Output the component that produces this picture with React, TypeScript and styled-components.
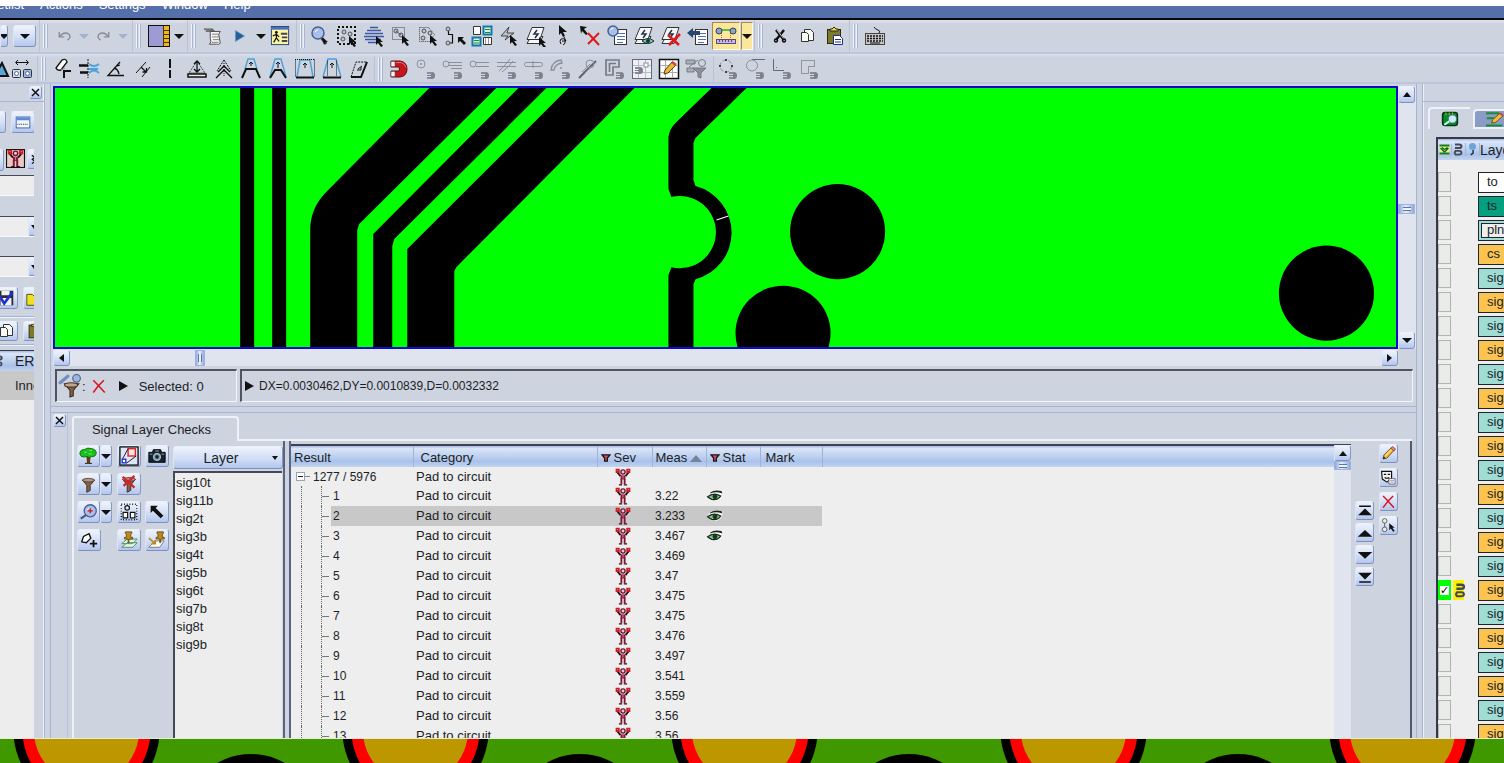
import React from "react";
import styled, { createGlobalStyle, css } from "styled-components";

const Global = createGlobalStyle`
  *, *::before, *::after { box-sizing: border-box; }
  html, body { margin: 0; padding: 0; }
  body { font-family: "Liberation Sans", Arial, sans-serif; font-size: 13px; color: #1b1e26; overflow: hidden; }
  button { font: inherit; color: inherit; border: 0; padding: 0; background: none; }
  ul { list-style: none; margin: 0; padding: 0; }
  svg { display: block; flex: none; }
`;

const panel = "#ced4df";
const line = "#a3b4d6";
const light = "#edf1f8";

/* ---------- icon drawing ---------- */

const k = "#111";
const g = "#8b8f98";
const b = "#4ea3dc";

const Cursor = ({ x, y }: { x: number; y: number }) => (
  <path transform={`translate(${x} ${y})`} d="M0 0l7 6-3 0 3 4-2 1-3-4-2 2z" fill={k} />
);
const Mag = ({ x = 12, y = 14 }: { x?: number; y?: number }) => (
  <g transform={`translate(${x} ${y})`}>
    <path d="M0 0h5q3 0 3 3.500t-3 3.500H0V5h4V4H0V3h4V2H0z" fill="#7c8089" />
    <path d="M0 1h5M0 6h4" stroke="#a6aab3" strokeWidth=".6" />
  </g>
);
const Lens = ({ x, y, r = 5 }: { x: number; y: number; r?: number }) => (
  <>
    <circle cx={x} cy={y} r={r} fill="#a9c0ea" stroke="#4a5f94" strokeWidth="1.500" />
    <path d={`M${x - r / 2} ${y - 1}q1-2 3-2`} stroke="#fff" fill="none" />
  </>
);
const Sheets = () => (
  <g fill="#f4f6fa" stroke="#333" strokeWidth="1">
    <path d="M2 18.500l4-7h12l-4 7z" />
    <path d="M2 14.500l5-12h12l-4 12z" />
    <path d="M12 5l-3 4h4l-3 4" fill="none" stroke="#234" strokeWidth="1.500" />
  </g>
);
const Dot = ({ x, y }: { x: number; y: number }) => (
  <circle cx={x} cy={y} r="2" fill="#b9c6d6" stroke="#555" />
);
const Funnel = () => (
  <>
    <path d="M4 6h14l-5 6v6l-4 2v-8z" fill="#80614b" stroke="#3a2a20" />
    <ellipse cx="11" cy="6" rx="7" ry="2" fill="#b89a80" stroke="#4a382c" />
  </>
);
const Pencil = () => (
  <>
    <path d="M4 18l1-5L14 4l4 3-9 10z" fill="#f0b830" stroke="#5a3d10" />
    <path d="M14 4l2-2 4 3-2 3z" fill="#e98a7a" stroke="#7a3a30" />
    <path d="M4 18l1-3 2 2z" fill={k} />
    <path d="M7 14l8-8" stroke="#fbe48c" strokeWidth="1.500" />
  </>
);
const Cross = () => (
  <path d="M4 4l6 6 8 9M17 4l-7 7-6 8" stroke="#d8101c" strokeWidth="1.800" fill="none" />
);
const Man = () => (
  <>
    <path d="M4 5l4 5M18 5l-4 5" stroke="#2c1018" strokeWidth="2.200" />
    <path d="M2 1h5v5H2zM15 1h5v5h-5z" fill="#c81c28" />
    <path d="M3.500 3h1.500M17 3h1.500" stroke="#f08a8a" />
    <circle cx="11" cy="5" r="2.600" fill="#f3c5d5" stroke="#6a1030" strokeWidth="1.600" />
    <path d="M8 9h6v5H8z" fill="#8e1a3c" />
    <path d="M11 9v4" stroke="#e0708c" strokeWidth="1.200" />
    <path d="M9 13v7M13 13v7" stroke="#7a1430" strokeWidth="2.200" />
    <path d="M6 20.500h4M12 20.500h4" stroke="#3a0c18" strokeWidth="1.500" />
  </>
);
const Eye = () => (
  <>
    <path d="M1 12Q7 1 20 5q2 9-7 12Q5 18 1 12z" fill="#fff" fillOpacity=".8" />
    <path d="M2 12q7-6 16-1-4 6-11 4-3-1-5-3z" fill="#8cc08c" stroke="#1a2c20" strokeWidth="1.600" />
    <circle cx="11" cy="12" r="3" fill="#123c1c" />
    <path d="M5 7q5-4 14-2l1 3Q12 5 5 8z" fill="#1c241c" />
  </>
);
const Doc = () => (
  <>
    <rect x="8.500" y="4.500" width="12" height="15" fill="#fff" stroke="#333" />
    <path d="M11 8.500h8M11 11.500h8M11 14.500h8M11 17.500h6" stroke="#5570a8" />
  </>
);

const icons: Record<string, React.ReactNode> = {
  undo: <path d="M4 6v6h6M5 11q5-6 11-2 3 4-2 7" fill="none" stroke="#858a95" strokeWidth="1.600" />,
  redo: <path d="M18 6v6h-6M17 11q-5-6-11-2-3 4 2 7" fill="none" stroke="#858a95" strokeWidth="1.600" />,
  palette: (
    <>
      <rect x="0.500" y="0.500" width="21" height="21" fill="#9d9bd6" stroke={k} />
      <path d="M15 1h6v20h-6z" fill="#f0b61e" />
      <path d="M15.500 1v20M16 5.500h5M16 9.500h5M16 13.500h5M16 17.500h5" stroke="#4a3605" />
    </>
  ),
  script: (
    <>
      <path d="M1 3.500h9l3 3M3 5.500h7" stroke="#555" fill="none" strokeWidth="1.500" />
      <path d="M8 6h11q-3 3-1 7l1 6q-2 2-4 1H7q3-2 1-6z" fill="#f4f4f2" stroke="#444" />
      <path d="M10 9h7M10 12h7M11 15h7M10 18h7" stroke="#777" />
    </>
  ),
  play: <path d="M6 5l10 6-10 6z" fill="#1f5f9a" stroke="#6a9cc8" />,
  report: (
    <>
      <rect x="1.500" y="0.500" width="19" height="20" fill="#fbf5a6" stroke="#223a70" />
      <path d="M1 1h20v3H1z" fill="#4a6fbd" />
      <circle cx="7" cy="7" r="1.500" fill={k} />
      <path d="M7 8v5l-3 5M7 13l3 4M3 11l4-2 3 3" stroke={k} fill="none" strokeWidth="1.300" />
      <path d="M12 8.500h7M13 12.500h6M13 16.500h6" stroke="#445" strokeWidth="2" />
    </>
  ),
  zoom: (
    <>
      <path d="M12 12l5 7" stroke="#333" strokeWidth="3" />
      <path d="M13 12l6 5-3 0-1 3z" fill={k} />
      <Lens x={9} y={8} r={6} />
    </>
  ),
  selDots: (
    <>
      <rect x="2" y="2" width="17" height="17" fill="none" stroke={k} strokeWidth="2" strokeDasharray="2 2" />
      <Dot x={8} y={7} /><Dot x={7} y={14} /><Dot x={14} y={9} />
      <Cursor x={13} y={11} />
    </>
  ),
  selLines: (
    <>
      <path d="M7 2.500h8M4 5.500h14M2 8.500h18M1 11.500h20M2 14.500h16M5 17.500h9" stroke="#3f55a5" strokeWidth="1.600" />
      <Cursor x={13} y={11} />
    </>
  ),
  selNet: (
    <>
      <rect x="2.500" y="2.500" width="12" height="12" fill="none" stroke="#444" strokeDasharray="1 1" />
      <Dot x={6} y={6} /><Dot x={11} y={10} /><path d="M6 6l5 4" stroke="#555" />
      <Cursor x={12} y={10} />
    </>
  ),
  selPoly: (
    <>
      <path d="M2.500 2.500h9l6 7-5 7h-10z" fill="none" stroke="#444" strokeDasharray="1 1" />
      <Dot x={7} y={6} /><Dot x={6} y={13} /><Dot x={13} y={8} />
      <Cursor x={13} y={10} />
    </>
  ),
  route: (
    <>
      <path d="M4.500 4v5.500h4V18h-5" fill="none" stroke={k} strokeWidth="1.200" />
      <Dot x={4} y={4} /><Dot x={4} y={18} />
      <path d="M14 12h6l-2 2 4 4-2 2-4-4-2 2z" fill={k} />
    </>
  ),
  tiles: (
    <>
      <path d="M2.500 1.500h7v8h-7zM12.500 12.500h8v7h-8z" fill="#fff" stroke="#333" />
      <path d="M12.500 1.500h8v8h-8zM1.500 12.500h8v8h-8z" fill="#d7f2dc" stroke="#167aa8" strokeWidth="2" />
      <path d="M14 4.500h5M14 7.500h5M3 15.500h5M3 18h5" stroke="#1b8a3c" />
      <path d="M14.500 13v6M17.500 13v6" stroke="#999" />
    </>
  ),
  bolt: (
    <>
      <path d="M11 2l-8 9h7l-3 4 9-7H9z" fill="#bcc4d0" stroke="#444" />
      <Cursor x={12} y={10} />
    </>
  ),
  sheetsCursor: (<><Sheets /><Cursor x={14} y={12} /></>),
  cursorLoop: (
    <>
      <path d="M7 0l8 7h-4l2 4-2 1-2-4-2 2z" fill={k} />
      <path d="M9 19q-2-3 0-5 3-1 4 1 1 4-2 5M12 12l2 4-4 0" fill="none" stroke={k} />
    </>
  ),
  cursorCross: (
    <>
      <path d="M1 1l7 1-3 2 4 5-2 1-4-4-1 3z" fill={k} />
      <path d="M9 8l11 12M20 8L9 19" stroke="#e01818" strokeWidth="2" />
    </>
  ),
  docLens: (<><Doc /><Lens x={7} y={6} r={5} /></>),
  sheetsEye: (
    <>
      <Sheets />
      <path d="M9 16q6-5 12 0-6 5-12 0z" fill="#8cc79a" stroke="#133" /><circle cx="15" cy="16" r="2" fill="#134" />
    </>
  ),
  sheetsCross: (<><Sheets /><path d="M8 10l11 10M20 9L9 20" stroke="#e01818" strokeWidth="2.500" /></>),
  docBack: (<><Doc /><path d="M0 8l6-5v3h7v4H6v3z" fill="#28466e" /></>),
  measure: (
    <>
      <path d="M5 5h12" stroke="#28b028" strokeWidth="1.500" />
      <path d="M6.500 8v6M15.500 8v6" stroke="#a07a20" strokeDasharray="1 1" />
      <circle cx="4" cy="6" r="3" fill="#8fa4c8" stroke="#34405c" />
      <circle cx="18" cy="6" r="3" fill="#8fa4c8" stroke="#34405c" />
      <rect x="1.500" y="14.500" width="19" height="4" fill="#c7b8e4" stroke="#5a4a80" />
      <path d="M4.500 15v2M7.500 15v2M10.500 15v2M13.500 15v2M16.500 15v2" stroke="#5a4a80" />
    </>
  ),
  cut: (
    <>
      <path d="M7 5l8 10M15 5L7 15" stroke={k} strokeWidth="2.500" />
      <path d="M8 5l7 9" stroke="#fff" strokeWidth=".8" />
      <circle cx="7" cy="15.500" r="1.500" fill="none" stroke={k} strokeWidth="1.500" /><circle cx="15" cy="15.500" r="1.500" fill="none" stroke={k} strokeWidth="1.500" />
    </>
  ),
  copy: (
    <g fill="#f8f8f4" stroke="#333">
      <path d="M8.500 4.500h6l3 3v8h-9z" /><path d="M5.500 7.500h5l2 2v7h-7z" />
    </g>
  ),
  paste: (
    <>
      <rect x="4.500" y="4.500" width="13" height="14" fill="#7d7a2c" stroke="#2c2b10" />
      <path d="M7 6V4h2l2-2 2 2h2v2z" fill="#e8d45c" stroke="#2c2b10" />
      <path d="M10.500 10.500h6l3 3v6h-9z" fill="#fff" stroke="#1f2f8a" /><path d="M12 14.500h6M12 17h6" stroke="#1f2f8a" />
    </>
  ),
  keyboard: (
    <>
      <path d="M15 8Q17 6 14 5T10 2" fill="none" stroke={k} />
      <rect x="1.500" y="8.500" width="19" height="11" fill="#c4c4c4" stroke="#444" />
      <path d="M3 11h16M3 13.500h16M3 16h16" stroke={k} strokeDasharray="2 1" strokeWidth="1.500" /><path d="M6 18h10" stroke={k} />
    </>
  ),
  snapEdge: (<><path d="M0 18h13L7 5z" fill="#59a6d8" stroke={k} strokeWidth="2" /></>),
  spacing: (
    <>
      <path d="M5 4.500h12M7 2L4.500 4.500 7 7M15 2l2.500 2.500L15 7" fill="none" stroke={k} />
      <rect x="1.500" y="11.500" width="8" height="8" fill="#d2dcee" stroke="#333" rx="1" />
      <rect x="12.500" y="11.500" width="8" height="8" fill="#9ab8e8" stroke="#333" rx="1" />
      <circle cx="5.500" cy="15.500" r="2" fill="#fff" stroke="#56a" /><circle cx="16.500" cy="15.500" r="2" fill="#fff" stroke="#56a" />
    </>
  ),
  hammer: (
    <>
      <path d="M5 10l6-8q4-2 5 2l-6 8q-4 1-5-2z" fill="#fff" stroke={k} strokeWidth="1.300" />
      <path d="M10 12l4-2" stroke="#888" />
      <path d="M13 20v-7h7" fill="none" stroke={k} strokeWidth="2" />
    </>
  ),
  align: (
    <>
      <path d="M10 1v19" stroke={k} strokeDasharray="2 1" />
      <path d="M1 7.500h9M2 14.500h8" stroke={k} strokeWidth="2.500" />
      <path d="M11 6q5 4 10 0M11 15q5-5 10 0M11 11h9" stroke={b} strokeWidth="2" fill="none" />
    </>
  ),
  angle: <path d="M19 17.500H3L15 4M9 10q4 1 5 6M12 8l3-1M3 17.500h16" fill="none" stroke={k} strokeWidth="1.300" />,
  parallel: (
    <>
      <path d="M4 15L14 4M10 19l8-10" stroke={k} />
      <path d="M9 9l5 5M14.500 10v4h-4" fill="none" stroke={k} strokeWidth="1.300" />
    </>
  ),
  vertical: <path d="M11 1v9M11 12v8" stroke={k} strokeWidth="2" />,
  triUp: (
    <>
      <path d="M11 3L3 15h16z" fill="none" stroke={k} strokeDasharray="1 1" />
      <path d="M2 19v-3h18v3z" fill="#eee" stroke={k} strokeWidth="1.500" />
      <path d="M11 3v11M8 6l3-3 3 3M8 11l3 3 3-3" fill="none" stroke={k} strokeWidth="1.300" />
    </>
  ),
  peaks: (
    <>
      <path d="M11 2L4 13M11 2l7 11" stroke={k} strokeDasharray="2 1" />
      <path d="M3 20l8-8 8 8M5 14l6-6 6 6" fill="none" stroke={k} strokeWidth="1.400" /><path d="M11 5v14" stroke={k} strokeDasharray="1 1" />
    </>
  ),
  trapA: (
    <>
      <path d="M5 11L8 1h6l3 10" fill="none" stroke={b} strokeWidth="1.500" />
      <path d="M2 20l4-9h10l4 9" fill="none" stroke={k} strokeWidth="2" /><path d="M11 8V4M9 6l2-2 2 2" fill="none" stroke={k} />
    </>
  ),
  trapB: (
    <>
      <path d="M3 19L8 1h6l5 18" fill="none" stroke={b} strokeWidth="1.500" />
      <path d="M3 20l5-8h6l5 8" fill="none" stroke={k} strokeWidth="2" /><path d="M11 10V4M9 6l2-2 2 2" fill="none" stroke={k} />
    </>
  ),
  trapC: (
    <>
      <path d="M3 19L6 2h10l3 17" fill="none" stroke={b} strokeWidth="1.500" />
      <path d="M1.500 1.500v17M20.500 1.500v17M1 1.500h20" stroke={k} strokeDasharray="1 1" />
      <path d="M2 19.500h18" stroke={k} strokeWidth="2" /><path d="M11 10V5M9 7l2-2 2 2" fill="none" stroke={k} />
    </>
  ),
  trapD: (
    <>
      <path d="M2 19L7 1h8l5 18" fill="none" stroke={b} strokeWidth="1.500" />
      <path d="M6.500 2.500v16M15.500 2.500v16" stroke={k} strokeDasharray="1 1" />
      <path d="M2 19.500h18" stroke={k} strokeWidth="2" /><path d="M11 10V5M9 7l2-2 2 2" fill="none" stroke={k} />
    </>
  ),
  slant: (
    <>
      <path d="M3 19h10l6-15" fill="none" stroke={k} strokeWidth="2" />
      <path d="M3 19L8 4h11" fill="none" stroke={k} strokeDasharray="2 1" /><path d="M9 12h4V9M10 11l4-3" fill="none" stroke={k} />
    </>
  ),
  magnet: (
    <>
      <path d="M3 3h9q7 1 7 8t-7 8H3v-6h8q1-2 0-4H3z" fill="#c4161c" stroke="#6a0a10" />
      <path d="M3 3.500h4v5H3zM3 13.500h4v5H3z" fill="#f4f4f4" stroke="#555" strokeWidth=".6" />
      <path d="M8 4.500h5q4 1 5 5" fill="none" stroke="#f07070" />
    </>
  ),
  mCenter: (<><circle cx="6" cy="6" r="4" fill="none" stroke={g} /><path d="M6 5v2M5 6h2" stroke={g} /><Mag /></>),
  mEdge: (<><circle cx="4" cy="6" r="3" fill="none" stroke={g} /><path d="M7 4.500h13M7 7.500h13M9 10.500h11" stroke={g} /><Mag /></>),
  mEnd: (<><circle cx="4" cy="6" r="3" fill="none" stroke={g} /><path d="M7 4.500h13M7 8.500h13" stroke={g} /><Mag /></>),
  mCrossing: (<><path d="M1 4.500h19M1 8.500h19" stroke={g} /><path d="M3 13Q8 9 14 1M6 14Q12 10 17 3" fill="none" stroke={g} /><Mag /></>),
  mMid: (<><rect x="1.500" y="4.500" width="18" height="4" rx="2" fill="none" stroke={g} /><path d="M10 3v7" stroke={g} /><Mag /></>),
  mArc: (<><path d="M1 12Q2 3 11 2l1 3Q5 6 4 12zM10 10h2" fill="none" stroke={g} strokeWidth="1.300" /><Mag /></>),
  mSlash: (<><path d="M2 20L19 3" stroke="#5d616b" strokeWidth="2" /><path d="M5 14L13 6M8 15l7-7" stroke={g} /><circle cx="13" cy="6" r="4" fill="none" stroke={g} /></>),
  mCorner: (<><path d="M2 2h13v7H9v8H2zM5 5.500h7M5.500 5v9" fill="none" stroke="#777b85" strokeWidth="1.700" /><Mag /></>),
  grid: (
    <>
      <rect x="1.500" y="1.500" width="19" height="19" fill="#eef0f5" stroke="#666a74" />
      <path d="M7.500 2v18M14.500 2v18M2 7.500h18M2 14.500h18" stroke="#b6bbc6" /><rect x="13" y="5" width="4" height="4" fill="#fff" stroke={g} /><Mag x={4} y={9} />
    </>
  ),
  gridPencil: (
    <>
      <rect x="1.500" y="1.500" width="19" height="19" fill="#fff" stroke={k} strokeWidth="1.500" />
      <path d="M7.500 2v18M14.500 2v18M2 7.500h18M2 14.500h18" stroke="#aaa" />
      <path d="M6 16l1-4 7-8 4 3-8 8z" fill="#e9b93a" stroke="#5c3b0c" /><path d="M14 4l4 3" stroke="#c44" strokeWidth="2.500" />
    </>
  ),
  mFilter: (
    <>
      <path d="M1 2h9v4H1zM2 10h7v4H2z" fill="#aaaeb8" stroke="#777b85" /><circle cx="17" cy="5" r="3.500" fill="none" stroke="#777b85" />
      <path d="M8 10h13l-5 5v5l-3-1v-4zM4 9l9-7" fill="#8b8f98" stroke="#777b85" />
    </>
  ),
  mQuad: (<><circle cx="9" cy="8" r="6" fill="none" stroke={g} strokeDasharray="4 2" /><path d="M8 1h2v2H8zM8 13h2v2H8zM2 7h2v2H2zM14 7h2v2h-2z" fill="#444" /><Mag /></>),
  mTangent: (<><path d="M8 1.500h13" stroke="#666a74" /><circle cx="8" cy="7.500" r="5.500" fill="none" stroke={g} /><Mag /></>),
  mPerp: (<><path d="M2.500 1v11.500H13M5 9.500h1" fill="none" stroke="#666a74" /><Mag /></>),
  mOutline: (<><path d="M3.500 2.500h13v6h-6v7h-7z" fill="none" stroke="#555" strokeDasharray="1 1" /><Mag /></>),
  window: (
    <>
      <rect x="3.500" y="5.500" width="15" height="12" fill="#f2f6fd" stroke="#3d61a8" />
      <path d="M4 6h14v3H4z" fill="#5a8ad6" /><path d="M5 13.500h12" stroke={k} strokeDasharray="1 1" />
    </>
  ),
  man: <Man />,
  manBox: (<><rect x=".5" y=".5" width="21" height="21" fill="#e8c9c4" stroke={k} strokeWidth="1.500" /><Man /></>),
  save: (<><path d="M2 3h17v16H2z" fill="#2c2c2c" /><path d="M6 3h9v5H6zM5 11h12v8H5z" fill="#f2f2f2" /><path d="M4 9l5 8L18 5" fill="none" stroke="#1f2fd0" strokeWidth="3" /></>),
  folder: <path d="M2 19V7h6l2 2h9v10z" fill="#f0e020" stroke="#4a4a10" />,
  chevron: <path d="M6 5l5 4-5 3M6 11l5 4-5 3" stroke={k} fill="none" strokeWidth="2" />,
  tree: (<><path d="M9 10h4l-1 9h3H7h3z" fill="#6a3d14" stroke="#4a2a0a" /><path d="M1 8q0-5 5-5 4-3 9-1 5 1 5 5-1 5-5 4-3 2-6 0-7 2-8-3z" fill="#18c018" stroke="#0d6a12" /><path d="M6 6h3M12 4h3M11 8h4" stroke="#8cf08c" /></>),
  shapes: (
    <>
      <rect x="1" y="1" width="20" height="20" fill="#dbe5f7" stroke={k} strokeWidth="1.500" />
      <rect x="10" y="3" width="8" height="8" fill="#fbe4e4" stroke="#e02020" strokeWidth="1.500" />
      <rect x="3.500" y="14.500" width="4" height="4" fill="#fff" stroke="#2030d0" strokeWidth="1.500" />
      <path d="M4 14L10 3M8 19l11-8" stroke={k} fill="none" />
    </>
  ),
  camera: (
    <>
      <path d="M2 7h4l1-3h8l1 3h4v11H2z" fill="#16222c" stroke="#05090c" />
      <circle cx="11" cy="12" r="4" fill="#7c9cae" stroke="#b8c8d0" /><circle cx="11" cy="12" r="2" fill="#16222c" /><path d="M3 9h3M16 9h3M9 5.500h4" stroke="#9ab" />
    </>
  ),
  funnel: <Funnel />,
  funnelOff: (<><Funnel /><path d="M4 3l13 12M17 2L5 13" stroke="#d8202a" strokeWidth="2.500" /></>),
  zoomIn: (<><Lens x={13} y={9} r={7} /><path d="M13 6v6M10 9h6" stroke="#d01818" strokeWidth="1.500" /><path d="M8 14l-6 4" stroke="#3c5c80" strokeWidth="2.500" /></>),
  marquee: (<><rect x="2.500" y="2.500" width="17" height="17" fill="none" stroke={k} strokeDasharray="1 2" strokeWidth="1.500" /><circle cx="9" cy="6.500" r="2.500" fill="none" stroke={k} strokeWidth="1.300" /><path d="M4.500 11.500h5v6h-5zM12.500 11.500h5v6h-5z" fill="#fff" stroke={k} strokeWidth="1.300" /></>),
  arrowNW: <path d="M4 4h8L9.500 6.500 18 15l-3 3-8.500-8.500L4 12z" fill={k} />,
  polyPlus: (<><path d="M3 13l2-6 6-3 2 5-5 5z" fill="#fff" stroke={k} strokeWidth="1.500" /><path d="M16 11v8M12 15h8" stroke={k} strokeWidth="2" /></>),
  pinStack: (<><path d="M3 19h12l5-5H9zM3 15h12l5-5H9z" fill="#e9f5e4" stroke="#4a8a5a" /><path d="M7 2h7v2l-1 1v3h2v2h-4v4h-1v-4H6V8h2V5L7 4z" fill="#b98a1c" stroke="#5a3d08" strokeWidth=".8" /></>),
  pinTurn: (<><path d="M2 19h12l5-7H9z" fill="#fdfdf0" stroke="#777" /><path d="M11 2h7v2l-1 1v3h2v2h-4v4h-1v-4h-4V8h2V5l-1-1z" fill="#b98a1c" stroke="#5a3d08" strokeWidth=".8" /><path d="M2 9l7 6M9 11v4H5" fill="none" stroke="#b88a20" strokeWidth="1.800" /></>),
  pencil: <Pencil />,
  mask: (<><path d="M2 3h13v9l-6 5-6-4z" fill="#f4f4f4" stroke={k} strokeWidth="1.500" /><path d="M5 7h3M10 7h3M6 11q3 2 6 0" stroke={k} strokeWidth="1.500" fill="none" /><path d="M11.500 12.500h8v7h-8z" fill="#fff" stroke="#555" /><path d="M13 15h5M13 17h5" stroke="#88a" /></>),
  cross: <Cross />,
  nodeCursor: (<><path d="M6 6v10" stroke="#444" /><circle cx="6" cy="5" r="3" fill="#e6f0e0" stroke="#444" /><circle cx="6" cy="16" r="3" fill="#e6f0e0" stroke="#444" /><Cursor x={12} y={8} /></>),
  first: <path d="M3 4.500h16M4 16l7-7 7 7z" fill={k} stroke={k} strokeWidth="2" />,
  up: <path d="M1 16l10-9 10 9z" fill={k} />,
  down: <path d="M1 7l10 9 10-9z" fill={k} />,
  last: <path d="M3 18h16M4 6l7 7 7-7z" fill={k} stroke={k} strokeWidth="2" />,
  lensFunnel: (
    <>
      <path d="M6 9h13l-5 6v5l-3 1v-6z" fill="#80614b" stroke="#3a2a20" /><ellipse cx="12" cy="10" rx="6" ry="2" fill="#c2a68c" stroke="#4a382c" />
      <path d="M2 8l7-6" stroke="#7190bd" strokeWidth="3" strokeLinecap="round" /><circle cx="17" cy="4" r="3.500" fill="#9cb6de" stroke="#4a5f94" />
    </>
  ),
  boardLens: (<><rect x="2" y="3" width="18" height="16" rx="3" fill="#0d8a2c" stroke="#053a10" strokeWidth="2" /><path d="M6 3v3M10 3v3M14 3v3" stroke="#d8c030" /><circle cx="14" cy="11" r="5" fill="#c9ecf6" stroke="#3a6a8a" /><path d="M10 14l-6 4" stroke="#cfe" strokeWidth="2.500" /></>),
  boardPencil: (<><path d="M0 4h16M1 10h9M0 19h20" stroke="#1a8a3a" strokeWidth="2.500" /><path d="M7 16l1-4 9-8 4 3-9 8z" fill="#f0c030" stroke="#5c3b0c" /><path d="M17 4l4 3" stroke="#c44" strokeWidth="2.500" /></>),
  display: (<><rect x="1" y="1" width="20" height="20" fill="#f4f06a" /><path d="M1 1h20v4H1zM1 17h20v4H1z" fill="#117a3a" /><path d="M3 8l8 8 8-8M6 7l5 4 6-4" fill="none" stroke="#063" strokeWidth="2.500" /></>),
  magPair: (
    <>
      <path d="M5 2.500h7q4 0 4 3t-4 3H5" fill="none" stroke="#444854" strokeWidth="3.500" />
      <path d="M5 13.500h7q4 0 4 3t-4 3H6q-3-3 0-6" fill="none" stroke="#444854" strokeWidth="3" />
    </>
  ),
  pin: (<><circle cx="11" cy="6" r="6" fill="#6aa6dc" /><path d="M12 12v5l-4 3" stroke="#234" strokeWidth="2.500" fill="none" /></>),
  funnelRed: <path d="M2 4h18l-6 7v7H8v-7z" fill="#c9525a" stroke="#22141a" strokeWidth="3" />,
  status: <Eye />,
};

const Icon = ({ name, size = 22 }: { name: string; size?: number }) => (
  <svg viewBox="0 0 22 22" width={size} height={size} aria-hidden="true">{icons[name]}</svg>
);

/* ---------- shared parts ---------- */

const raised = css`
  background: linear-gradient(#eef3fc, #d3def5 55%, #b3c6ee);
  border: 1px solid;
  border-color: #eaf0fb #8899c4 #7f90bd #dbe4f5;
  border-radius: 3px;
`;

const Caret = styled.span<{ $dir?: "down" | "up" | "left" | "next" | "right"; $faint?: boolean; $small?: boolean }>`
  flex: none;
  width: 0;
  height: 0;
  border: ${p => (p.$small ? 3 : p.$dir && p.$dir !== "right" ? 4 : 5)}px solid transparent;
  ${p => {
    const c = p.$faint ? "#a3b3cf" : "#111";
    const w = p.$small ? 4 : 5;
    switch (p.$dir) {
      case "up": return css`border-bottom: ${w}px solid ${c}; border-top: 0;`;
      case "left": return css`border-right: ${w}px solid ${c}; border-left: 0;`;
      case "next": return css`border-left: ${w}px solid ${c}; border-right: 0;`;
      case "right": return css`border-left: 9px solid ${c}; border-right: 0;`;
      default: return css`border-top: ${w}px solid ${c}; border-bottom: 0;`;
    }
  }}
`;

const RaisedButton = styled.button<{ $w?: number; $h?: number }>`
  ${raised}
  display: flex;
  align-items: center;
  justify-content: center;
  flex: none;
  overflow: hidden;
  width: ${p => p.$w ?? 24}px;
  height: ${p => p.$h ?? 22}px;
`;

/* ---------- menu and tool bars ---------- */

const Page = styled.div`
  display: flex;
  flex-direction: column;
  height: 100vh;
  background: #fff;
  overflow: hidden;
`;

const MenuBar = styled.nav`
  display: flex;
  align-items: flex-end;
  gap: 16px;
  flex: none;
  height: 14px;
  margin-top: 6px;
  padding-bottom: 5px;
  background: #546fa9;
  border-bottom: 2px solid #05070c;
  color: #fff;
  line-height: 16px;
  overflow: hidden;
`;

const MenuItem = styled.button<{ $clip?: boolean }>`
  flex: none;
  line-height: 16px;
  ${p => p.$clip && css`
    display: flex;
    justify-content: flex-end;
    width: 24px;
  `}
`;

const ToolBar = styled.div<{ $h: number; $top?: number }>`
  display: flex;
  flex: none;
  height: ${p => p.$h}px;
  padding-top: ${p => p.$top ?? 0}px;
  background: linear-gradient(#dde2ec, ${panel} 12%);
  border-bottom: 2px solid #bcc5dc;
`;

const ToolGroup = styled.div<{ $gap?: number; $end?: number; $last?: boolean }>`
  display: flex;
  align-items: center;
  flex: none;
  padding-right: ${p => p.$end ?? 0}px;
  border-right: ${p => (p.$last ? 0 : 1)}px solid #b8c2da;
  &::before {
    content: "";
    display: ${p => (p.$gap === undefined ? "none" : "block")};
    width: 5px;
    height: 24px;
    margin: 0 ${p => p.$gap ?? 0}px 0 3px;
    background: linear-gradient(to right, #eef2f9 1px, #a9b6d2 1px 2px, #d3daea 2px 3px, #eef2f9 3px 4px, #a9b6d2 4px);
  }
`;

const Tool = styled.button<{ $w?: number; $on?: boolean }>`
  display: flex;
  align-items: center;
  justify-content: center;
  flex: none;
  width: ${p => p.$w ?? 27}px;
  height: 28px;
  overflow: hidden;
  ${p => p.$on && css`
    background: #fbe79b;
    border: 1px solid;
    border-color: #a8865a #fffbe8 #fffbe8 #a8865a;
  `}
`;

const Spacer = styled.span<{ $w: number }>`
  flex: none;
  width: ${p => p.$w}px;
`;

const Tools = ({ names }: { names: string[] }) => (
  <>{names.map(n => <Tool key={n} aria-label={n}><Icon name={n} /></Tool>)}</>
);

/* ---------- left dock ---------- */

const Main = styled.main`
  display: flex;
  flex: 1;
  min-height: 0;
  background: ${panel};
`;

const LeftDock = styled.aside`
  display: flex;
  flex-direction: column;
  flex: none;
  width: 45px;
  margin-right: 5px;
  border-right: 1px solid ${line};
  box-shadow: inset -1px 0 ${light};
`;

const DockHead = styled.div`
  display: flex;
  justify-content: flex-end;
  flex: none;
  height: 18px;
  padding: 2px 2px 0 0;
  border-bottom: 1px solid ${line};
`;

const CloseButton = styled.button`
  ${raised}
  display: flex;
  align-items: center;
  justify-content: center;
  width: 13px;
  height: 13px;
`;

const DockBody = styled.div`
  display: flex;
  flex-direction: column;
  flex: 1;
  width: 34px;
  min-height: 0;
  overflow: hidden;
`;

const DockRow = styled.div<{ $top: number; $shift?: number; $gap?: number }>`
  display: flex;
  flex: none;
  gap: ${p => p.$gap ?? 5}px;
  margin-top: ${p => p.$top}px;
  margin-left: -${p => p.$shift ?? 0}px;
`;

const Field = styled.div<{ $top: number }>`
  display: flex;
  align-items: center;
  flex: none;
  height: 21px;
  width: 42px;
  margin-top: ${p => p.$top}px;
  background: #ededed;
  border-top: 1px solid #444a58;
  border-bottom: 1px solid #f8f9fb;
  input, select {
    width: 28px;
    flex: none;
    border: 0;
    padding: 0;
    background: none;
    appearance: none;
  }
`;

const Rule = styled.div<{ $top: number }>`
  flex: none;
  height: 2px;
  margin-top: ${p => p.$top}px;
  background: ${line};
  border-bottom: 1px solid ${light};
`;

const headFill = css`
  background: linear-gradient(#a9b9dc, #d9e4f7 12%, #c5d6f2 40%, #a9c1ea 75%, #c3d4ef);
`;

const DockTitle = styled.div`
  ${headFill}
  display: flex;
  align-items: center;
  flex: none;
  gap: 10px;
  height: 21px;
  margin-top: 4px;
  border-top: 1px solid #333845;
  font-size: 14px;
  white-space: nowrap;
`;

const IconClip = styled.span`
  display: flex;
  justify-content: flex-end;
  flex: none;
  width: 5px;
  overflow: hidden;
`;

const DockItem = styled.div`
  flex: none;
  height: 29px;
  padding-left: 15px;
  background: #c8c8c8;
  line-height: 29px;
`;

const DockFill = styled.div`
  flex: 1;
  background: #ededed;
`;

/* ---------- centre column ---------- */

const Center = styled.section`
  display: flex;
  flex-direction: column;
  flex: 1;
  min-width: 0;
  border-left: 1px solid ${line};
  border-right: 1px solid ${line};
`;

const ViewGrid = styled.div`
  display: grid;
  grid-template-columns: 1fr 18px;
  grid-template-rows: 263px 17px;
  flex: none;
  padding: 2px 0 0 2px;
`;

const Canvas = styled.div`
  border: 2px solid #0b0bd0;
  background: #00ff00;
  overflow: hidden;
  svg { width: 100%; height: 100%; }
`;

const track = css`
  background: #e0e4ef;
`;

const VScroll = styled.div`
  ${track}
  display: flex;
  flex-direction: column;
  align-items: flex-start;
`;

const HScroll = styled.div`
  ${track}
  display: flex;
  align-items: center;
`;

const Thumb = styled.div<{ $w: number; $h: number }>`
  display: flex;
  align-items: center;
  justify-content: center;
  flex: none;
  width: ${p => p.$w}px;
  height: ${p => p.$h}px;
  background: linear-gradient(to right, #8fa9dc, #e7eefb 45%, #8fa9dc);
  border: 1px solid #9fb3dc;
  &::after {
    content: "";
    width: ${p => (p.$w > p.$h ? 8 : 4)}px;
    height: ${p => (p.$w > p.$h ? 4 : 8)}px;
    border: solid #5875b0;
    border-width: ${p => (p.$w > p.$h ? "1px 0" : "0 1px")};
    background: #eef3fc;
  }
`;

const Grow = styled.span<{ $n: number }>`
  flex: ${p => p.$n} 1 0;
`;

const StatusBar = styled.div`
  display: flex;
  flex: none;
  gap: 3px;
  margin-top: 3px;
  padding: 0 3px 0 4px;
`;

const StatusBox = styled.div<{ $w?: number }>`
  display: flex;
  align-items: center;
  flex: ${p => (p.$w ? "none" : "1")};
  width: ${p => (p.$w ? `${p.$w}px` : "auto")};
  height: 33px;
  padding-left: ${p => (p.$w ? 1 : 3)}px;
  border: 1px solid;
  border-width: 2px 1px 1px 2px;
  border-color: #50545f #f2f5fa #f2f5fa #50545f;
`;

const Selected = styled.span`
  margin-left: 11px;
`;

const Coords = styled.output`
  margin-left: 5px;
  font-size: 12px;
`;

const StatusClear = styled.button`
  margin: 0 11px 0 4px;
`;

const Splitter = styled.div`
  flex: none;
  height: 7px;
  margin-top: 4px;
  border: solid ${line};
  border-width: 1px 0;
`;

const Bottom = styled.div`
  display: flex;
  flex: 1;
  min-height: 0;
`;

const CloseRail = styled.div`
  flex: none;
  width: 17px;
  padding: 1px 0 0 2px;
  border-right: 1px solid #b6c2dc;
`;

const Checks = styled.div`
  display: flex;
  flex-direction: column;
  flex: 1;
  min-width: 0;
  padding: 3px 4px 0 4px;
`;

const TabLine = styled.div`
  display: flex;
  flex: none;
  height: 25px;
  &::after {
    content: "";
    flex: 1;
    border-bottom: 2px solid ${light};
  }
`;

const CheckTab = styled.button`
  width: 167px;
  padding-right: 8px;
  border: solid ${light};
  border-width: 2px 2px 0 2px;
  border-radius: 3px 4px 0 0;
  text-align: center;
`;

const CheckBody = styled.div`
  display: flex;
  flex: 1;
  min-height: 0;
  border-left: 2px solid ${light};
  border-right: 2px solid #525a70;
`;

const ButtonGrid = styled.div`
  display: grid;
  grid-template-columns: 36px 24px 24px;
  grid-auto-rows: 23px;
  gap: 5px 4px;
  align-content: start;
  flex: none;
  width: 99px;
  padding: 4px 0 0 3px;
`;

const Pair = styled.div`
  display: flex;
`;

const LayerPane = styled.div`
  display: flex;
  flex-direction: column;
  flex: none;
  width: 110px;
  margin-top: 5px;
`;

const LayerButton = styled.button`
  ${raised}
  display: flex;
  align-items: center;
  flex: none;
  height: 23px;
  padding-right: 4px;
  font-size: 14px;
  span:first-child { flex: 1; padding-right: 4px; }
`;

const LayerNames = styled.ul`
  flex: 1;
  margin: 2px 1px 0 0;
  padding-top: 1px;
  background: #ededed;
  border: solid #444a58;
  border-width: 2px 0 0 2px;
  li { height: 18px; line-height: 18px; padding-left: 1px; }
`;

const PaneDivider = styled.div`
  flex: none;
  width: 8px;
  border: solid #59647f;
  border-width: 0 2px;
`;

const Results = styled.div`
  flex: 1;
  min-width: 0;
  margin-top: 3px;
  background: #eee;
  border-top: 2px solid #3c4354;
  overflow: hidden;
`;

const ResultTable = styled.table`
  width: 100%;
  table-layout: fixed;
  border-collapse: collapse;
  line-height: 16px;
  thead tr { ${headFill} height: 21px; }
  th {
    padding: 2px 0 0 3px;
    font-weight: normal;
    text-align: left;
    border-right: 1px solid #9fb3d8;
  }
  th:last-child { border-right: 0; }
  td { padding: 0 0 0 3px; }
  td:nth-child(5) { padding: 0; }
`;

const HeadCell = styled.span<{ $pad?: number }>`
  display: flex;
  align-items: center;
  gap: 3px;
  padding-left: ${p => p.$pad ?? 0}px;
`;

const Row = styled.tr<{ $on?: boolean; $root?: boolean }>`
  height: ${p => (p.$root ? 19 : 20)}px;
  td { ${p => p.$on && "background: #c8c8c8;"} }
  td:first-child {
    padding: 0 0 0 10px;
    ${p => p.$on && "background: linear-gradient(to right, transparent 40px, #c8c8c8 40px);"}
  }
  td:last-child { background: none; }
`;

const Num = styled.span`
  font-size: 12px;
`;

const TreeCell = styled.div<{ $root?: boolean }>`
  display: flex;
  align-items: center;
  height: ${p => (p.$root ? 19 : 20)}px;
`;

const Guide = styled.span`
  width: 20px;
  height: 100%;
  border-left: 1px dotted #666;
`;

const Tick = styled.span`
  width: 8px;
  height: 100%;
  margin-right: 4px;
  border-left: 1px dotted #666;
  background: linear-gradient(#777, #777) center / 100% 1px no-repeat;
`;

const Expander = styled.button`
  width: 9px;
  height: 9px;
  margin-left: -5px;
  border: 1px solid #9aa3b5;
  background: linear-gradient(#222, #222) center / 5px 1px no-repeat, #fff;
`;

const Stub = styled.span`
  width: 5px;
  height: 1px;
  margin-right: 3px;
  background: #888;
`;

const TableScroll = styled.div`
  ${track}
  display: flex;
  flex-direction: column;
  align-items: center;
  flex: none;
  width: 17px;
  margin-top: 3px;
  border-top: 1px solid #3c4354;
`;

const SideTools = styled.div`
  display: flex;
  flex: none;
  gap: 5px;
  width: 59px;
  padding: 3px 0 0 4px;
`;

const SideColumn = styled.div<{ $top?: number; $gap: number }>`
  display: flex;
  flex-direction: column;
  gap: ${p => p.$gap}px;
  padding-top: ${p => p.$top ?? 0}px;
`;

/* ---------- right dock ---------- */

const RightDock = styled.aside`
  display: flex;
  flex-direction: column;
  flex: none;
  width: 82px;
  margin-left: 5px;
  border-left: 1px solid ${line};
  box-shadow: inset 1px 0 ${light};
  overflow: hidden;
`;

const RightTabs = styled.div`
  display: flex;
  align-items: flex-end;
  gap: 3px;
  flex: none;
  height: 27px;
  padding-left: 5px;
  margin-bottom: 8px;
`;

const RightTab = styled.button<{ $on?: boolean }>`
  display: flex;
  align-items: center;
  justify-content: center;
  flex: none;
  width: 42px;
  height: ${p => (p.$on ? 22 : 20)}px;
  background: ${p => (p.$on ? panel : "#8a9bc6")};
  border: solid ${light};
  border-width: 2px 0 ${p => (p.$on ? 0 : 2)}px 2px;
  border-radius: 4px 0 0 0;
`;

const LayerFrame = styled.div`
  flex: 1;
  min-height: 0;
  margin-left: 13px;
  background: #eee;
  border: solid #343a49;
  border-width: 2px 0 0 2px;
  overflow: hidden;
`;

const LayerHead = styled.div`
  ${headFill}
  display: flex;
  align-items: center;
  height: 21px;
  margin-bottom: 12px;
  font-size: 14px;
  white-space: nowrap;
`;

const HeadIcon = styled.span`
  display: flex;
  justify-content: center;
  flex: none;
  width: 14px;
  border-right: 1px solid #a5b6d8;
`;

const LayerRow = styled.label`
  display: flex;
  height: 24px;
`;

const LayerCheck = styled.input`
  appearance: none;
  display: grid;
  place-items: center;
  flex: none;
  width: 13px;
  height: 20px;
  margin: 0;
  background: #e9ede7;
  border: 1px solid #b5b0b5;
  &:checked { background: #00ff00; border-color: #00ff00; }
  &:checked::after {
    content: "✓";
    width: 9px;
    height: 9px;
    background: #fff;
    color: #000;
    font: bold 11px/9px "DejaVu Sans", sans-serif;
    text-align: center;
  }
`;

const Marker = styled.span<{ $on?: boolean }>`
  display: grid;
  place-items: center;
  flex: none;
  width: 11px;
  height: 20px;
  margin: 0 14px 0 2px;
  background: ${p => (p.$on ? "#fff200" : "none")};
`;

const Swatch = styled.span<{ $fill: string; $framed?: boolean }>`
  flex: none;
  width: 60px;
  height: 21px;
  padding-left: 8px;
  background: ${p => p.$fill};
  border: 1px solid #20242c;
  line-height: 18px;
  ${p => p.$framed && css`
    box-shadow: inset 0 0 0 2px #9edcd4, inset 0 0 0 3px #20242c;
  `}
`;

const BoardStrip = styled.footer`
  flex: none;
  height: 25px;
  background: #409800;
  border-top: 1px solid #e4ecd8;
  svg { width: 100%; height: 24px; }
`;

/* ---------- data ---------- */

const teal = "#9edcd4";
const orange = "#fbc451";
const layers = [
  { name: "to", fill: "#fff" },
  { name: "ts", fill: "#06a080" },
  { name: "pln", fill: "#eee", framed: true },
  { name: "cs", fill: orange },
  ...Array.from({ length: 20 }, (_, i) => ({ name: "sig", fill: i % 2 ? orange : teal, framed: false, on: i === 13 })),
] as { name: string; fill: string; framed?: boolean; on?: boolean }[];

const measures = ["3.22", "3.233", "3.467", "3.469", "3.47", "3.475", "3.475", "3.476", "3.497", "3.541", "3.559", "3.56", "3.56"];
const layerNames = ["sig10t", "sig11b", "sig2t", "sig3b", "sig4t", "sig5b", "sig6t", "sig7b", "sig8t", "sig9b"];

const Close = () => (
  <CloseButton aria-label="Close">
    <svg viewBox="0 0 9 9" width="9" height="9"><path d="M1 1l7 7M8 1L1 8" stroke="#111" strokeWidth="1.500" /></svg>
  </CloseButton>
);

const Traces = () => (
  <svg viewBox="55 88 1340 259" preserveAspectRatio="xMinYMin slice" role="img" aria-label="Board view">
    <path d="M240 88h14v260h-14zM272 88h14v260h-14z" />
    <path d="M429 88L325 193Q310 209 310 230V348H357V230L359 224 496 88z" />
    <path d="M518 88L373 234V348H392V246L394 239 546 88z" />
    <path d="M568 88L407 249V348H454V271L456 267 634 88z" />
    <path d="M711 88L675 123Q669 129 668 137V189L671 197A36 36 0 1 1 671 267L668 275V348H693V284L695 279A48 48 0 0 0 695 186L693 180V143L695 138 746 88z" />
    <path d="M716 220l12-4" stroke="#fff" strokeWidth="1" />
    <circle cx="837" cy="231.500" r="47.500" />
    <circle cx="782.500" cy="333" r="47.500" />
    <circle cx="1325.500" cy="293" r="47.500" />
  </svg>
);

export default function App() {
  return (
    <Page>
      <Global />
      <MenuBar>
        <MenuItem $clip>Netlist</MenuItem>
        <MenuItem>Actions</MenuItem>
        <MenuItem>Settings</MenuItem>
        <MenuItem>Window</MenuItem>
        <MenuItem>Help</MenuItem>
      </MenuBar>

      <ToolBar $h={34}>
        <ToolGroup $end={3}>
          <RaisedButton $w={8} aria-label="Previous list"><Caret /></RaisedButton>
          <Spacer $w={5} />
          <RaisedButton $w={23} aria-label="Open list"><Caret /></RaisedButton>
        </ToolGroup>
        <ToolGroup $gap={6}>
          <Tool $w={22} aria-label="Undo"><Icon name="undo" size={18} /></Tool>
          <Tool $w={16} aria-label="Undo list"><Caret $faint /></Tool>
          <Tool $w={22} aria-label="Redo"><Icon name="redo" size={18} /></Tool>
          <Tool $w={18} aria-label="Redo list"><Caret $faint /></Tool>
        </ToolGroup>
        <ToolGroup $gap={6}>
          <Tool $w={24} aria-label="Palette"><Icon name="palette" /></Tool>
          <Tool $w={16} aria-label="Palette list"><Caret /></Tool>
        </ToolGroup>
        <ToolGroup $gap={6} $end={2}>
          <Tool $w={22} aria-label="Script"><Icon name="script" size={20} /></Tool>
          <Tool $w={32} aria-label="Run"><Icon name="play" size={20} /></Tool>
          <Tool $w={10} aria-label="Run list"><Caret /></Tool>
          <Tool $w={28} aria-label="Report"><Icon name="report" size={20} /></Tool>
        </ToolGroup>
        <ToolGroup $gap={1} $end={1}>
          <Tools names={["zoom", "selDots", "selLines", "selNet", "selPoly", "route", "tiles", "bolt", "sheetsCursor", "cursorLoop", "cursorCross", "docLens", "sheetsEye", "sheetsCross", "docBack"]} />
          <Spacer $w={1} />
          <Tool $w={28} $on aria-label="Measure"><Icon name="measure" /></Tool>
          <Spacer $w={1} />
          <Tool $w={12} $on aria-label="Measure list"><Caret /></Tool>
        </ToolGroup>
        <ToolGroup $gap={3} $end={2}>
          <Tools names={["cut", "copy", "paste"]} />
        </ToolGroup>
        <ToolGroup $gap={2} $last>
          <Tool $w={30} aria-label="Keyboard"><Icon name="keyboard" /></Tool>
        </ToolGroup>
      </ToolBar>

      <ToolBar $h={30} $top={2}>
        <ToolGroup $end={4}>
          <Tool $w={11} aria-label="Snap edge"><Icon name="snapEdge" /></Tool>
          <Tool $w={22} aria-label="Spacing"><Icon name="spacing" /></Tool>
        </ToolGroup>
        <ToolGroup $gap={2} $end={2}>
          <Tools names={["hammer", "align", "angle", "parallel", "vertical", "triUp", "peaks", "trapA", "trapB", "trapC", "trapD", "slant"]} />
        </ToolGroup>
        <ToolGroup $gap={2} $end={4}>
          <Tools names={["magnet", "mCenter", "mEdge", "mEnd", "mCrossing", "mMid", "mArc", "mSlash", "mCorner", "grid", "gridPencil", "mFilter"]} />
        </ToolGroup>
        <ToolGroup $last>
          <Tools names={["mQuad", "mTangent", "mPerp", "mOutline"]} />
        </ToolGroup>
      </ToolBar>

      <Main>
        <LeftDock>
          <DockHead><Close /></DockHead>
          <DockBody>
            <DockRow $top={9} $shift={18}>
              <RaisedButton aria-label="List"><Caret /></RaisedButton>
              <RaisedButton aria-label="Window"><Icon name="window" size={20} /></RaisedButton>
            </DockRow>
            <DockRow $top={16} $shift={20} $gap={2}>
              <RaisedButton aria-label="Previous" />
              <Icon name="manBox" size={19} />
              <RaisedButton $w={16} $h={20} aria-label="More"><Icon name="chevron" size={14} /></RaisedButton>
            </DockRow>
            <Field $top={4}><input aria-label="Name" /></Field>
            <Field $top={20}><select aria-label="Type" /><RaisedButton $w={12} $h={19} tabIndex={-1} aria-label="Open type"><Caret $small /></RaisedButton></Field>
            <Field $top={19}><select aria-label="Range" /><RaisedButton $w={12} $h={19} tabIndex={-1} aria-label="Open range"><Caret $small /></RaisedButton></Field>
            <DockRow $top={10} $shift={6}>
              <RaisedButton aria-label="Save"><Icon name="save" size={20} /></RaisedButton>
              <RaisedButton aria-label="Open"><Icon name="folder" size={20} /></RaisedButton>
            </DockRow>
            <Rule $top={7} />
            <DockRow $top={3} $shift={6}>
              <RaisedButton $h={20} aria-label="Copy"><Icon name="copy" /></RaisedButton>
              <RaisedButton $h={20} aria-label="Paste"><Icon name="paste" size={20} /></RaisedButton>
            </DockRow>
            <Rule $top={3} />
            <DockTitle><IconClip><Icon name="magPair" size={12} /></IconClip>ERF</DockTitle>
            <DockItem>Inner</DockItem>
            <DockFill />
          </DockBody>
        </LeftDock>

        <Center>
          <ViewGrid>
            <Canvas><Traces /></Canvas>
            <VScroll>
              <RaisedButton $w={17} $h={17} aria-label="Scroll up"><Caret $dir="up" /></RaisedButton>
              <Grow $n={101} />
              <Thumb $w={17} $h={10} />
              <Grow $n={119} />
              <RaisedButton $w={17} $h={17} aria-label="Scroll down"><Caret /></RaisedButton>
            </VScroll>
            <HScroll>
              <RaisedButton $w={17} $h={16} aria-label="Scroll left"><Caret $dir="left" /></RaisedButton>
              <Grow $n={125} />
              <Thumb $w={10} $h={16} />
              <Grow $n={1176} />
              <RaisedButton $w={17} $h={16} aria-label="Scroll right"><Caret $dir="next" /></RaisedButton>
            </HScroll>
          </ViewGrid>
          <StatusBar>
            <StatusBox $w={182}>
              <Icon name="lensFunnel" size={24} />:
              <StatusClear aria-label="Clear selection"><Icon name="cross" size={18} /></StatusClear>
              <Caret $dir="right" />
              <Selected>Selected: 0</Selected>
            </StatusBox>
            <StatusBox>
              <Caret $dir="right" />
              <Coords>DX=0.0030462,DY=0.0010839,D=0.0032332</Coords>
            </StatusBox>
          </StatusBar>
          <Splitter />
          <Bottom>
            <CloseRail><Close /></CloseRail>
            <Checks>
              <TabLine><CheckTab>Signal Layer Checks</CheckTab></TabLine>
              <CheckBody>
                <ButtonGrid>
                  {["tree", "funnel", "zoomIn"].map((n, i) => (
                    <React.Fragment key={n}>
                      <Pair>
                        <RaisedButton $w={23} aria-label={n}><Icon name={n} size={19} /></RaisedButton>
                        <RaisedButton $w={12} aria-label={`${n} list`}><Caret /></RaisedButton>
                      </Pair>
                      <RaisedButton aria-label={["Shapes", "Filter off", "Marquee"][i]}><Icon name={["shapes", "funnelOff", "marquee"][i]} size={20} /></RaisedButton>
                      {i === 1 ? <span /> : (
                        <RaisedButton aria-label={i ? "Pick" : "Snapshot"}><Icon name={i ? "arrowNW" : "camera"} size={20} /></RaisedButton>
                      )}
                    </React.Fragment>
                  ))}
                  <RaisedButton aria-label="Add polygon"><Icon name="polyPlus" size={20} /></RaisedButton>
                  <RaisedButton aria-label="Pin stack"><Icon name="pinStack" size={20} /></RaisedButton>
                  <RaisedButton aria-label="Pin turn"><Icon name="pinTurn" size={20} /></RaisedButton>
                </ButtonGrid>
                <LayerPane>
                  <LayerButton><span>Layer</span><Caret $small /></LayerButton>
                  <LayerNames>{layerNames.map(n => <li key={n}>{n}</li>)}</LayerNames>
                </LayerPane>
                <PaneDivider />
                <Results>
                  <ResultTable>
                    <colgroup>
                      <col width="122" /><col width="184" /><col width="55" /><col width="54" /><col width="54" /><col width="62" /><col />
                    </colgroup>
                    <thead>
                      <tr>
                        <th>Result</th>
                        <th><HeadCell $pad={4}>Category</HeadCell></th>
                        <th><HeadCell><Icon name="funnelRed" size={10} />Sev</HeadCell></th>
                        <th><HeadCell>Meas<svg width="13" height="8"><path d="M0 8l6-7 6 7z" fill="#76839f" /></svg></HeadCell></th>
                        <th><HeadCell><Icon name="funnelRed" size={10} />Stat</HeadCell></th>
                        <th><HeadCell $pad={2}>Mark</HeadCell></th>
                        <th />
                      </tr>
                    </thead>
                    <tbody>
                      <Row $root>
                        <td><TreeCell $root><Expander aria-label="Collapse" /><Stub /><Num>1277 / 5976</Num></TreeCell></td>
                        <td>Pad to circuit</td>
                        <td><HeadCell $pad={14}><Icon name="man" size={18} /></HeadCell></td>
                        <td /><td /><td /><td />
                      </Row>
                      {measures.map((m, i) => (
                        <Row key={i} $on={i === 1}>
                          <td><TreeCell><Guide /><Tick /><Num>{i + 1}</Num></TreeCell></td>
                          <td>Pad to circuit</td>
                          <td><HeadCell $pad={14}><Icon name="man" size={18} /></HeadCell></td>
                          <td><Num>{m}</Num></td>
                          <td>{i < 3 && <Icon name="status" size={18} />}</td>
                          <td /><td />
                        </Row>
                      ))}
                    </tbody>
                  </ResultTable>
                </Results>
                <TableScroll>
                  <RaisedButton $w={17} $h={16} aria-label="Results up"><Caret $dir="up" /></RaisedButton>
                  <Thumb $w={17} $h={9} />
                </TableScroll>
                <SideTools>
                  <SideColumn $top={57} $gap={3}>
                    {["first", "up", "down", "last"].map(n => (
                      <RaisedButton key={n} $w={19} $h={19} aria-label={n}><Icon name={n} size={16} /></RaisedButton>
                    ))}
                  </SideColumn>
                  <SideColumn $gap={5}>
                    {["pencil", "mask", "cross", "nodeCursor"].map(n => (
                      <RaisedButton key={n} $w={19} $h={19} aria-label={n}><Icon name={n} size={17} /></RaisedButton>
                    ))}
                  </SideColumn>
                </SideTools>
              </CheckBody>
            </Checks>
          </Bottom>
        </Center>

        <RightDock>
          <DockHead />
          <RightTabs>
            <RightTab $on aria-label="Board"><Icon name="boardLens" size={18} /></RightTab>
            <RightTab aria-label="Edit board"><Icon name="boardPencil" size={18} /></RightTab>
          </RightTabs>
          <LayerFrame>
            <LayerHead>
              <HeadIcon><Icon name="display" size={11} /></HeadIcon>
              <HeadIcon><Icon name="magPair" size={13} /></HeadIcon>
              <HeadIcon><Icon name="pin" size={13} /></HeadIcon>
              <span>Layer</span>
            </LayerHead>
            {layers.map((l, i) => (
              <LayerRow key={i}>
                <LayerCheck type="checkbox" defaultChecked={l.on} />
                <Marker $on={l.on}>{l.on && <Icon name="magPair" size={15} />}</Marker>
                <Swatch $fill={l.fill} $framed={l.framed}>{l.name}</Swatch>
              </LayerRow>
            ))}
          </LayerFrame>
        </RightDock>
      </Main>

      <BoardStrip>
        <svg viewBox="0 739 1504 24" preserveAspectRatio="xMinYMin slice" aria-hidden="true">
          {[0, 1, 2, 3, 4].map(i => (
            <g key={i} transform={`translate(${i * 329} 0)`}>
              <circle cx="86.500" cy="731" r="73" />
              <circle cx="86.500" cy="731" r="64" fill="#f00" />
              <circle cx="86.500" cy="731" r="52.500" fill="#bc9700" />
              <circle cx="251" cy="822" r="68" />
            </g>
          ))}
        </svg>
      </BoardStrip>
    </Page>
  );
}
